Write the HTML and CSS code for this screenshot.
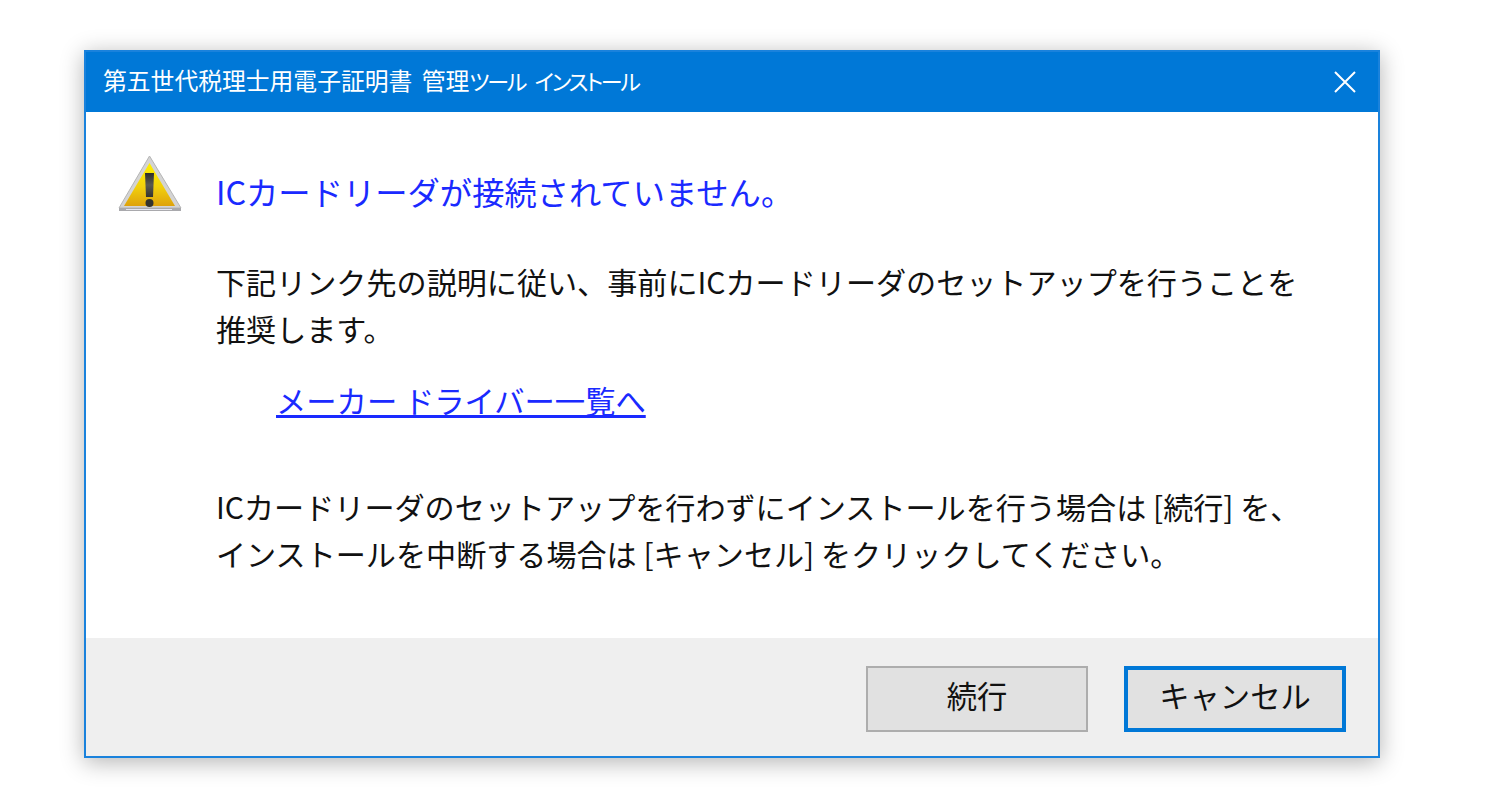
FILE: index.html
```html
<!DOCTYPE html>
<html lang="ja">
<head>
    <meta charset="UTF-8">
    <title>第五世代税理士用電子証明書 管理ツール インストール</title>
    <link rel="stylesheet" href="styles.css">
</head>
<body>
    <div class="dialog">
        <div class="title-bar">
            <span class="title-text">第五世代税理士用電子証明書 管理<span class="kana">ツール</span> <span class="kana">インストール</span></span>
            <svg class="close-icon" width="22" height="22" viewBox="0 0 22 22">
                <path d="M1 1L21 21M21 1L1 21" stroke="#fff" stroke-width="2" fill="none"/>
            </svg>
        </div>

        <div class="content">
            <svg class="warn-icon" width="66" height="58" viewBox="0 0 66 58">
                <defs>
                    <linearGradient id="warn-fill" x1="0" y1="0" x2="0" y2="1">
                        <stop offset="0" stop-color="#fff000"/>
                        <stop offset="0.55" stop-color="#f2d10c"/>
                        <stop offset="1" stop-color="#dea20c"/>
                    </linearGradient>
                    <linearGradient id="warn-mark" x1="0" y1="0" x2="0" y2="1">
                        <stop offset="0" stop-color="#2c2c2a"/>
                        <stop offset="0.5" stop-color="#5a5a52"/>
                        <stop offset="1" stop-color="#33332f"/>
                    </linearGradient>
                </defs>
                <path d="M31.500 1L63 53H1Z" fill="#d4d4d4" stroke="#b5b5b5" stroke-width="1"/>
                <path d="M31.500 8L57 51H6Z" fill="url(#warn-fill)"/>
                <rect x="1" y="53" width="62" height="3" fill="#a9a9ad"/>
                <rect x="8" y="54" width="46" height="1" fill="#e4e6f2"/>
                <path d="M27 18H36L35 42H28Z" fill="url(#warn-mark)"/>
                <circle cx="31.500" cy="48" r="4" fill="#33332f"/>
            </svg>

            <div class="message">
                <h1 class="heading">ICカードリーダが接続されていません。</h1>
                <p class="para">下記リンク先の説明に従い、事前にICカードリーダのセットアップを行うことを<br>推奨します。</p>
                <a class="maker-link" href="#">メーカー ドライバー一覧へ</a>
                <p class="para">ICカードリーダのセットアップを行わずにインストールを行う場合は [続行] を、<br>インストールを中断する場合は [キャンセル] をクリックしてください。</p>
            </div>
        </div>

        <div class="footer">
            <button class="btn">続行</button>
            <button class="btn btn-focus">キャンセル</button>
        </div>
    </div>
</body>
</html>
```

FILE: styles.css
```css
html, body {
    height: 100%;
}

body {
    margin: 0;
    background: #fff;
    font-family: "Noto Sans CJK JP", "Liberation Sans", sans-serif;
    padding: 50px 0 0 84px;
    box-sizing: border-box;
    overflow: hidden;
}

.dialog {
    width: 1296px;
    height: 708px;
    box-sizing: border-box;
    border: 2px solid #1a82dc;
    background: #fff;
    display: flex;
    flex-direction: column;
    box-shadow: 0 4px 22px rgba(0, 0, 0, 0.3);
}

.title-bar {
    height: 60px;
    flex: none;
    background: #0078d7;
    color: #fff;
    display: flex;
    align-items: center;
    justify-content: space-between;
    padding: 0 22px 4px 17px;
    box-sizing: border-box;
}

.title-text {
    font-size: 23.800px;
    line-height: 30px;
    font-feature-settings: "palt";
    word-spacing: 4px;
}

.kana {
    font-size: 22px;
    letter-spacing: -2.200px;
}

.close-icon {
    margin-top: 4px;
}

.content {
    flex: 1;
    display: flex;
    align-items: flex-start;
    padding: 43px 0 0 32px;
}

.warn-icon {
    flex: none;
    margin-right: 32px;
}

.message {
    padding-top: 13px;
}

.heading {
    margin: 0 0 43px;
    font-size: 32.300px;
    font-weight: normal;
    line-height: 47px;
    color: #1a2aff;
}

.para {
    margin: 0;
    font-size: 30.100px;
    line-height: 47px;
    color: #111;
}

.maker-link {
    display: inline-block;
    margin: 31px 0 66px 60px;
    font-size: 30.300px;
    line-height: 34px;
    color: #1a2aff;
    text-underline-offset: 2px;
}

.footer {
    height: 118px;
    flex: none;
    background: #efefef;
    display: flex;
    justify-content: flex-end;
    gap: 36px;
    padding: 28px 32px 0 0;
    box-sizing: border-box;
}

.btn {
    width: 222px;
    height: 66px;
    box-sizing: border-box;
    background: #e1e1e1;
    border: 2px solid #adadad;
    padding: 0 0 8px;
    font-family: inherit;
    font-size: 30.300px;
    color: #111;
}

.btn-focus {
    border: 4px solid #0078d7;
}
```
